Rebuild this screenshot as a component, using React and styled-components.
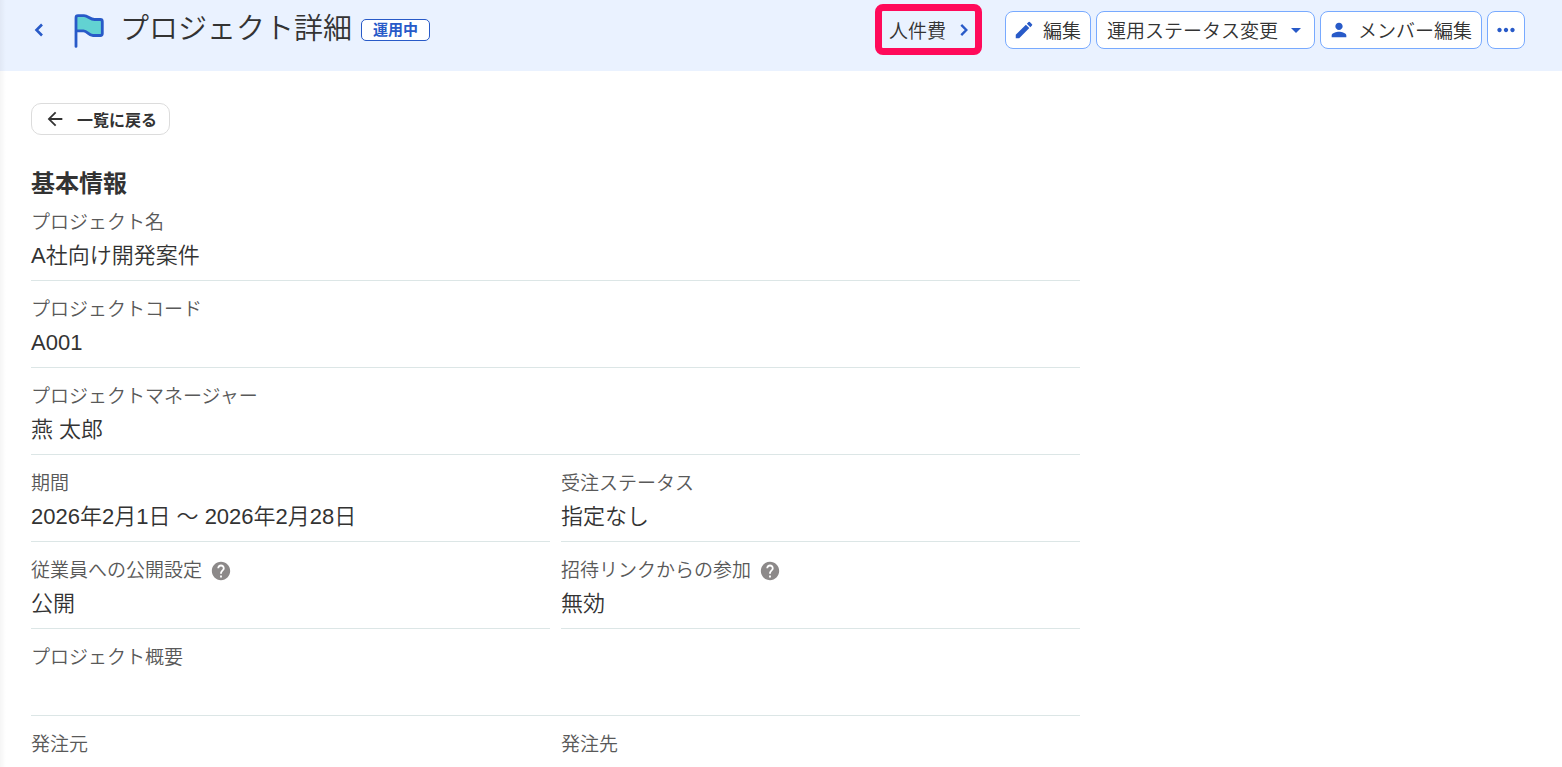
import React from "react";
import styled, { createGlobalStyle } from "styled-components";
import {
  MdArrowBack,
  MdArrowDropDown,
  MdEdit,
  MdHelp,
  MdMoreHoriz,
  MdPerson,
} from "react-icons/md";

const fields = [
  { label: "プロジェクト名", value: "A社向け開発案件", wide: true },
  { label: "プロジェクトコード", value: "A001", wide: true },
  { label: "プロジェクトマネージャー", value: "燕 太郎", wide: true },
  { label: "期間", value: "2026年2月1日 〜 2026年2月28日" },
  { label: "受注ステータス", value: "指定なし" },
  { label: "従業員への公開設定", value: "公開", help: true },
  { label: "招待リンクからの参加", value: "無効", help: true },
  { label: "プロジェクト概要", value: "", wide: true },
  { label: "発注元", value: "" },
  { label: "発注先", value: "" },
];

const Flag = () => (
  <FlagIcon viewBox="0 0 32 38" fill="none" aria-hidden="true">
    <path
      d="M3 18.9V5.7Q3 3.7 5 3.7H11C15 3.7 17 7.5 21.5 7.5H27.3Q29.3 7.5 29.3 9.5V21.5Q29.3 23.5 27.3 23.5H20C15.5 23.5 14.5 18.9 10.5 18.9Z"
      fill="#62d2d2"
    />
    <path
      d="M3 34.4V5.7Q3 3.7 5 3.7H11C15 3.7 17 7.5 21.5 7.5H27.3Q29.3 7.5 29.3 9.5V21.5Q29.3 23.5 27.3 23.5H20C15.5 23.5 14.5 18.9 10.5 18.9H3"
      stroke="#285ac8"
      strokeWidth="2.8"
      strokeLinecap="round"
      strokeLinejoin="round"
    />
  </FlagIcon>
);

const Chevron = ({ size, d }) => (
  <svg width={size} height={size} viewBox="0 0 24 24" fill="none" aria-hidden="true">
    <path d={d} stroke="currentColor" strokeWidth="2.6" />
  </svg>
);

const App = () => {
  return (
    <Page>
      <GlobalStyle />
      <Header>
        <CollapseButton type="button" aria-label="戻る">
          <Chevron size={24} d="M15 6.5L9.5 12L15 17.5" />
        </CollapseButton>
        <Flag />
        <Title>プロジェクト詳細</Title>
        <Badge>運用中</Badge>
        <Actions>
          <CostLink href="#cost">
            人件費
            <Chevron size={22} d="M9 6.5L14.5 12L9 17.5" />
          </CostLink>
          <ActionButton type="button">
            <MdEdit size={22} />
            編集
          </ActionButton>
          <ActionButton type="button" $dropdown>
            運用ステータス変更
            <MdArrowDropDown size={24} />
          </ActionButton>
          <ActionButton type="button">
            <MdPerson size={22} />
            メンバー編集
          </ActionButton>
          <ActionButton type="button" $square aria-label="その他">
            <MdMoreHoriz size={26} />
          </ActionButton>
        </Actions>
      </Header>
      <Main>
        <BackLink href="#list">
          <MdArrowBack size={22} />
          一覧に戻る
        </BackLink>
        <Heading>基本情報</Heading>
        <FieldList>
          {fields.map((field) => (
            <Field key={field.label} $wide={field.wide}>
              <dt>
                {field.label}
                {field.help && (
                  <HelpButton type="button" aria-label={`${field.label}のヘルプ`}>
                    <MdHelp size={22} />
                  </HelpButton>
                )}
              </dt>
              <dd>{field.value}</dd>
            </Field>
          ))}
        </FieldList>
      </Main>
    </Page>
  );
};

export default App;

const GlobalStyle = createGlobalStyle`
  * {
    box-sizing: border-box;
  }

  body {
    margin: 0;
    color: #333;
    background: #fff;
    font-family: "Liberation Sans", "Noto Sans CJK JP", sans-serif;
    font-weight: 350;
    overflow: hidden;
  }

  button {
    font-family: inherit;
    cursor: pointer;
  }
`;

const edgeShade = "linear-gradient(to right, rgba(0, 0, 0, 0.04), transparent 6px)";

const Page = styled.div`
  height: 100vh;
  overflow: hidden;
  background: ${edgeShade}, #fff;
`;

const Header = styled.header`
  display: flex;
  align-items: flex-start;
  padding: 11px 37px 11px 27px;
  min-height: 71px;
  background: ${edgeShade}, #eaf2ff;
`;

const CollapseButton = styled.button`
  display: flex;
  margin: 7px 22px 0 0;
  padding: 0;
  border: none;
  background: none;
  color: #285ac8;
`;

const FlagIcon = styled.svg`
  flex: none;
  width: 32px;
  height: 38px;
  margin-top: 1px;
`;

const Title = styled.h1`
  margin: 0 9px 0 15px;
  font-size: 29px;
  font-weight: 350;
  line-height: 36px;
  white-space: nowrap;
`;

const Badge = styled.span`
  margin-top: 8px;
  padding: 0 11px;
  border: 1px solid #285ac8;
  border-radius: 5px;
  background: #fff;
  color: #285ac8;
  font-size: 15px;
  font-weight: bold;
  line-height: 20px;
  white-space: nowrap;
`;

const Actions = styled.nav`
  display: flex;
  align-items: center;
  gap: 5px;
  margin: -7px 0 0 auto;
`;

const CostLink = styled.a`
  display: flex;
  align-items: center;
  gap: 7px;
  height: 51px;
  margin-right: 18px;
  padding: 0 0 0 7px;
  border: 7px solid #ff0a5a;
  border-radius: 8px;
  color: #333;
  font-size: 19px;
  text-decoration: none;
  white-space: nowrap;

  svg {
    color: #285ac8;
  }
`;

const ActionButton = styled.button`
  display: flex;
  align-items: center;
  justify-content: center;
  gap: ${(props) => (props.$dropdown ? "6px" : "8px")};
  height: 38px;
  min-width: 38px;
  padding: ${(props) =>
    props.$square ? "0" : props.$dropdown ? "0 6px 0 10px" : "0 9px 0 7px"};
  border: 1px solid #78aaff;
  border-radius: 8px;
  background: #fff;
  color: #333;
  font-size: 19px;
  font-weight: 350;
  white-space: nowrap;

  svg {
    color: #285ac8;
  }
`;

const Main = styled.main`
  padding: 32px 31px;
`;

const BackLink = styled.a`
  display: inline-flex;
  align-items: center;
  gap: 11px;
  height: 32px;
  padding: 0 12px;
  border: 1px solid #dcdcdc;
  border-radius: 10px;
  background: #fff;
  color: #333;
  font-size: 16px;
  font-weight: bold;
  text-decoration: none;
`;

const Heading = styled.h2`
  margin: 31px 0 6px;
  font-size: 24px;
  font-weight: bold;
  line-height: 36px;
`;

const FieldList = styled.dl`
  display: grid;
  grid-template-columns: 1fr 1fr;
  column-gap: 11px;
  row-gap: 14px;
  max-width: 1049px;
  margin: 0;
`;

const Field = styled.div`
  grid-column: ${(props) => (props.$wide ? "1 / -1" : "auto")};
  border-bottom: 1px solid #dce6e6;

  dt {
    display: flex;
    align-items: center;
    gap: 8px;
    color: #595959;
    font-size: 19px;
    line-height: 30px;
  }

  dd {
    min-height: 42px;
    margin: 0;
    padding-bottom: 6px;
    font-size: 22px;
    line-height: 36px;
  }
`;

const HelpButton = styled.button`
  display: flex;
  padding: 0;
  border: none;
  background: none;
  color: #8c8989;
`;
